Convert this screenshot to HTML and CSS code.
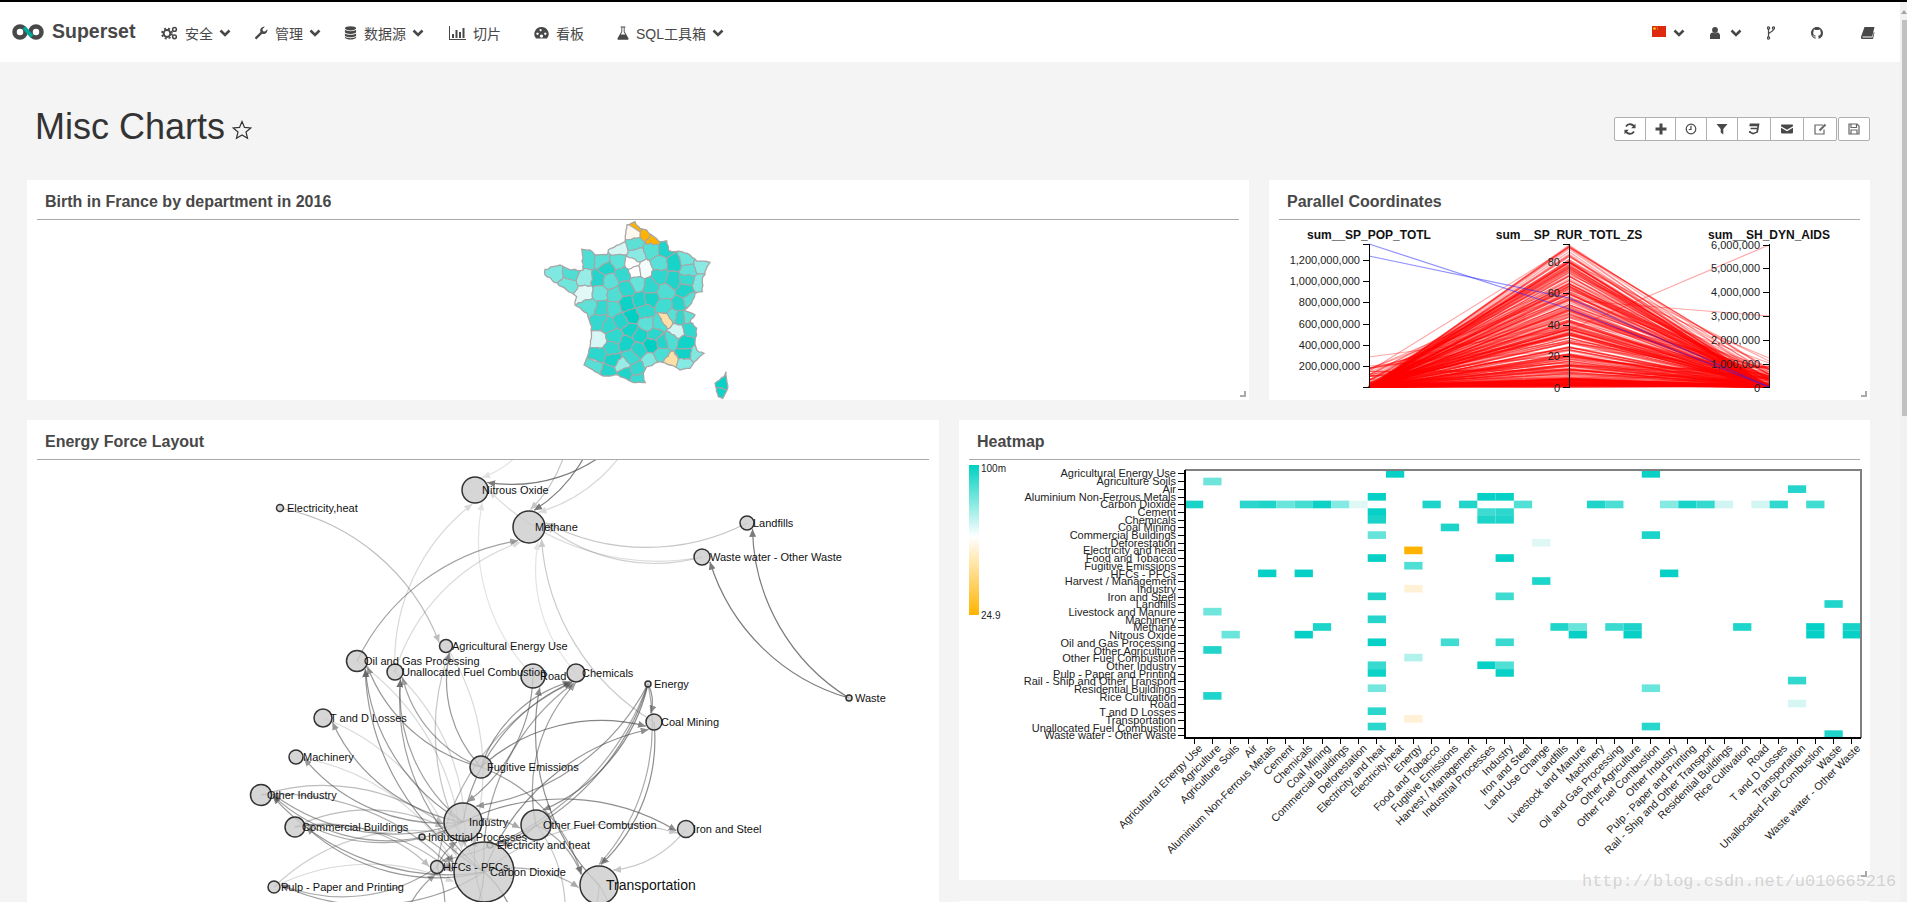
FILE: index.html
```html
<!DOCTYPE html>
<html lang="zh">
<head>
<meta charset="utf-8">
<title>Misc Charts</title>
<link rel="stylesheet" href="styles.css">
</head>
<body>
<div class="topline"></div>
<div class="shell">
  <div class="page">
    <nav class="navbar">
      <a class="brand">
        <svg class="logo" viewBox="0 0 32 16"><circle class="logo-ring" cx="8" cy="8" r="5.500"/><circle class="logo-ring" cx="24" cy="8" r="5.500"/><path class="logo-teal" d="M12 3.500 L20 12.500"/></svg>
        <span>Superset</span>
      </a>
      <ul class="menu">
        <li class="menu-item"><svg class="ico w17" viewBox="0 0 17 14"><circle class="gear-a" cx="6" cy="7.5" r="3.4"/><circle class="gear-b" cx="6" cy="7.5" r="5"/><circle class="gear-c" cx="13.5" cy="3.4" r="1.9"/><circle class="gear-c" cx="13.5" cy="10.8" r="1.9"/></svg><span>安全</span><svg class="chev" viewBox="0 0 12 8"><path d="M1.5 1.5 L6 6 L10.500 1.500"/></svg></li>
        <li class="menu-item"><svg class="ico w14" viewBox="0 0 14 14"><path d="M0.700 11.700 L6.500 5.900 C5.500 3 7.500 0.300 10.900 0.700 L8.500 3.100 L8.900 5.200 L11 5.600 L13.400 3.200 C13.800 6.600 11 8.800 8.100 7.700 L2.300 13.400 Z"/></svg><span>管理</span><svg class="chev" viewBox="0 0 12 8"><path d="M1.5 1.5 L6 6 L10.500 1.500"/></svg></li>
        <li class="menu-item"><svg class="ico w13" viewBox="0 0 13 15"><ellipse cx="6.500" cy="2.500" rx="6" ry="2.300"/><path d="M0.500 4 C2 6 11 6 12.500 4 V6.800 C11 9 2 9 0.500 6.800 Z M0.500 8 C2 10 11 10 12.500 8 V10.400 C11 12.500 2 12.500 0.500 10.400 Z M0.500 11.500 C2 13.500 11 13.500 12.500 11.500 V12.700 C11 15.200 2 15.200 0.500 12.700 Z"/></svg><span>数据源</span><svg class="chev" viewBox="0 0 12 8"><path d="M1.5 1.5 L6 6 L10.500 1.500"/></svg></li>
        <li class="menu-item plain first-plain"><svg class="ico w17" viewBox="0 0 17 14"><path d="M0 0 H1 V13 H17 V14 H0 Z M3 8 H5 V12 H3 Z M6.500 4 H8.500 V12 H6.500 Z M10 6 H12 V12 H10 Z M13.500 2 H15.500 V12 H13.500 Z"/></svg><span>切片</span></li>
        <li class="menu-item plain"><svg class="ico w15" viewBox="0 0 15 14"><path fill-rule="evenodd" d="M7.500 1 A7 7 0 0 1 13 12.500 H2 A7 7 0 0 1 7.500 1 Z M3.500 6.500 a1.200 1.200 0 1 0 .01 0 Z M6.600 3 a1.100 1.100 0 1 0 .01 0 Z M11.300 6.500 a1.200 1.200 0 1 0 .01 0 Z M7.500 8.500 a1.600 1.600 0 1 0 .01 0 Z"/></svg><span>看板</span></li>
        <li class="menu-item"><svg class="ico w12" viewBox="0 0 12 15"><path d="M3.500 0.500 H8.500 V1.500 H7.700 V6 L11.800 13 C12.200 14 11.600 14.700 10.800 14.700 H1.200 C0.400 14.700 -0.200 14 0.200 13 L4.300 6 V1.500 H3.500 Z M5.200 1.500 V6.300 L3.500 9.200 H8.500 L6.800 6.300 V1.500 Z"/></svg><span>SQL工具箱</span><svg class="chev" viewBox="0 0 12 8"><path d="M1.5 1.5 L6 6 L10.500 1.500"/></svg></li>
      </ul>
      <ul class="menu-right">
        <li class="tool lang"><svg class="flag" viewBox="0 0 14 11"><rect class="flag-bg" width="14" height="11"/><circle class="flag-star" cx="2.500" cy="2.500" r="1.300"/><circle class="flag-star" cx="5" cy="1" r=".4"/><circle class="flag-star" cx="5.700" cy="2.200" r=".4"/><circle class="flag-star" cx="5.500" cy="3.700" r=".4"/></svg><svg class="chev" viewBox="0 0 12 8"><path d="M1.5 1.5 L6 6 L10.500 1.500"/></svg></li>
        <li class="tool user"><svg class="ico w10" viewBox="0 0 10 12"><circle cx="5" cy="3" r="2.900"/><path d="M0 12 V8.500 C0 6.500 1.500 5.800 2.700 5.500 C4 6.500 6 6.500 7.300 5.500 C8.500 5.800 10 6.500 10 8.500 V12 Z"/></svg><svg class="chev" viewBox="0 0 12 8"><path d="M1.5 1.5 L6 6 L10.500 1.500"/></svg></li>
        <li class="tool fork"><svg class="ico-line w8" viewBox="0 0 8 13"><circle cx="1.500" cy="1.500" r="1.100"/><circle cx="1.500" cy="11.500" r="1.100"/><circle cx="6.500" cy="1.500" r="1.100"/><path d="M1.500 2.600 V10.400 M6.500 2.600 C6.500 6 1.500 5 1.500 8"/></svg></li>
        <li class="tool hub"><svg class="ico w12" viewBox="0 0 16 16"><path d="M8 0C3.580 0 0 3.580 0 8c0 3.540 2.290 6.530 5.470 7.590.4.070.55-.17.55-.38 0-.19-.01-.82-.01-1.490-2.010.37-2.530-.49-2.690-.94-.09-.23-.48-.94-.82-1.130-.28-.15-.68-.52-.01-.53.63-.01 1.080.58 1.230.82.72 1.210 1.870.87 2.330.66.070-.52.28-.87.51-1.070-1.780-.2-3.640-.89-3.640-3.950 0-.87.31-1.590.82-2.150-.08-.2-.36-1.020.08-2.120 0 0 .67-.21 2.200.82.64-.18 1.320-.27 2-.27.68 0 1.360.09 2 .27 1.530-1.040 2.200-.82 2.200-.82.44 1.100.16 1.920.08 2.120.51.56.82 1.270.82 2.150 0 3.070-1.870 3.750-3.650 3.950.29.25.54.73.54 1.480 0 1.070-.01 1.930-.01 2.200 0 .21.15.46.55.38A8.013 8.013 0 0016 8c0-4.420-3.580-8-8-8z"/></svg></li>
        <li class="tool book"><svg class="ico w14" viewBox="0 0 14 12"><path d="M3.500 0 H13.500 L11.200 9.500 H2 C1.200 9.500 1 10.500 2 10.500 H11.500 L12.800 5 L13.500 5.500 L12 12 H1.500 C0 12 -0.300 10.500 0.200 9.300 Z"/></svg></li>
      </ul>
    </nav>

    <header class="dash-head">
      <h1 class="dash-title">Misc Charts <svg class="star" viewBox="0 0 20 20"><path d="M10 1.500 L12.500 7.400 L18.800 7.900 L14 12 L15.500 18.300 L10 15 L4.500 18.300 L6 12 L1.200 7.900 L7.500 7.400 Z"/></svg></h1>
      <div class="actions">
        <div class="btn-group">
          <button class="btn b32"><svg class="ico w12" viewBox="0 0 12 12"><path class="stroke" d="M10.500 4.500 A4.700 4.700 0 0 0 2 3.500 M1.500 7.500 A4.700 4.700 0 0 0 10 8.500"/><path d="M11.500 0.800 V5.200 H7.200 Z M0.500 11.200 V6.800 H4.800 Z"/></svg></button>
          <button class="btn b30"><svg class="ico w12" viewBox="0 0 12 12"><path d="M4.500 0.500 H7.500 V4.500 H11.500 V7.500 H7.500 V11.500 H4.500 V7.500 H0.500 V4.500 H4.500 Z"/></svg></button>
          <button class="btn b31"><svg class="ico-line w12" viewBox="0 0 12 12"><circle cx="6" cy="6" r="4.800"/><path d="M6 2.800 V6.500 H3.800"/></svg></button>
          <button class="btn b31"><svg class="ico w12" viewBox="0 0 12 12"><path d="M0.500 1 H11.500 L7.300 6 V11.500 L4.700 9.500 V6 Z"/></svg></button>
          <button class="btn b33"><svg class="ico w12" viewBox="0 0 12 12"><path d="M1.800 0.500 H11.500 L10 9.500 L5 11.500 L0.800 9.500 L1.100 8 L2.800 8 L2.700 8.800 L5.200 9.800 L8.300 8.700 L8.800 6.300 H2.400 L2.700 4.700 H9.100 L9.400 3.300 H1.300 Z"/></svg></button>
          <button class="btn b33"><svg class="ico w12" viewBox="0 0 15 11"><path d="M1 0 H14 C14.600 0 15 .4 15 1 V2 L7.500 6.500 L0 2 V1 C0 .4 .4 0 1 0 Z M0 3.800 L7.500 8.300 L15 3.800 V10 C15 10.600 14.600 11 14 11 H1 C.4 11 0 10.600 0 10 Z"/></svg></button>
          <button class="btn b34"><svg class="ico-line w13 soft" viewBox="0 0 13 12"><path d="M9 2 H1 V11 H10 V6.500"/><path class="thick" d="M5.500 7.500 L11.500 1.500"/></svg></button>
        </div>
        <button class="btn b31 solo"><svg class="ico-line w12 soft" viewBox="0 0 12 12"><path d="M1 1 H9 L11 3 V11 H1 Z M3 1 V4.500 H8.500 V1 M3 11 V7 H9 V11"/></svg></button>
      </div>
    </header>

    <section class="row row-top">
      <article class="card">
        <div class="card-head"><h2>Birth in France by department in 2016</h2></div>
        <svg id="france" class="chart" viewBox="27 220 1222 180"></svg>
        <span class="resize"></span>
      </article>
      <article class="card">
        <div class="card-head"><h2>Parallel Coordinates</h2></div>
        <svg id="parallel" class="chart" viewBox="1269 220 601 180"></svg>
        <span class="resize"></span>
      </article>
    </section>

    <section class="row row-bottom">
      <article class="card card-force">
        <div class="card-head"><h2>Energy Force Layout</h2></div>
        <svg id="force" class="chart" viewBox="27 460 912 500"></svg>
      </article>
      <div class="stack">
        <article class="card card-heat">
          <div class="card-head"><h2>Heatmap</h2></div>
          <svg id="heatmap" class="chart" viewBox="959 460 911 420"></svg>
          <span class="resize"></span>
        </article>
        <article class="card card-next"></article>
      </div>
    </section>
  </div>
  <aside class="scrollbar"><span class="scroll-arrow"></span><span class="scroll-thumb"></span></aside>
</div>
<div class="watermark">http://blog.csdn.net/u010665216</div>
<script src="charts.js"></script>
</body>
</html>
```
FILE: styles.css
```css
* { box-sizing: border-box; }
html, body { margin: 0; height: 902px; overflow: hidden; }
body { background: #f4f4f4; font-family: "Liberation Sans", "Noto Sans CJK SC", sans-serif; color: #484848; position: relative; }
.topline { height: 2px; background: #000; }
.shell { display: flex; height: 900px; }
.page { width: 1900px; flex: none; overflow: hidden; }

.navbar { height: 60px; background: #fff; display: flex; align-items: center; padding: 2px 0 0 12px; }
.brand { display: flex; align-items: center; gap: 8px; font-size: 19.5px; font-weight: 700; color: #484848; width: 149px; flex: none; margin-top: -3px; }
.logo { width: 32px; height: 16px; display: block; }
.logo-ring { fill: none; stroke: #484848; stroke-width: 4.500; }
.logo-teal { stroke: #00a699; stroke-width: 4; }

.menu, .menu-right { list-style: none; margin: 0; padding: 0; display: flex; align-items: center; }
.menu { gap: 23px; font-size: 14px; }
.menu-item { display: flex; align-items: center; gap: 6px; }
.menu-item .ico { margin-right: 1px; }
.menu-item.plain { margin-right: 10px; }
.menu-item.first-plain { margin-left: 2px; }
.menu-item > span { white-space: nowrap; }
.ico { fill: #484848; display: block; flex: none; height: 14px; }
.ico-line { fill: none; stroke: #484848; stroke-width: 1.200; display: block; flex: none; height: 14px; }
.ico .stroke { fill: none; stroke: #484848; stroke-width: 1.800; }
.thick { stroke-width: 2; }
.soft { stroke: #666; }
.w8 { width: 8px; } .w10 { width: 10px; } .w12 { width: 12px; } .w13 { width: 13px; }
.w14 { width: 14px; } .w15 { width: 15px; } .w17 { width: 17px; }
.gear-a { fill: none; stroke: #484848; stroke-width: 2; }
.gear-b { fill: none; stroke: #484848; stroke-width: 1.800; stroke-dasharray: 2 2; }
.gear-c { fill: none; stroke: #484848; stroke-width: 1.500; }
.chev { width: 12px; height: 8px; display: block; flex: none; fill: none; stroke: #484848; stroke-width: 2.600; }

.menu-right { margin-left: auto; padding-right: 25px; }
.tool { display: flex; align-items: center; gap: 7px; }
.lang { margin-right: 25px; }
.user { margin-right: 25px; gap: 10px; }
.fork { margin-right: 36px; }
.hub { margin-right: 38px; }
.flag { width: 14px; height: 11px; display: block; margin-top: -4px; }
.flag-bg { fill: #de2910; }
.flag-star { fill: #ffde00; }

.dash-head { height: 118px; display: flex; justify-content: space-between; align-items: flex-start; padding: 45px 30px 0 35px; }
.dash-title { margin: 0; font-size: 36px; line-height: 40px; font-weight: 400; color: #333; display: flex; align-items: center; gap: 0; white-space: pre; }
.star { width: 20px; height: 20px; margin: 5px 0 0 -3px; fill: none; stroke: #333; stroke-width: 1.200; }
.actions { display: flex; margin-top: 10px; gap: 1px; }
.btn-group { display: flex; }
.btn { height: 24px; padding: 0; background: #fff; border: 1px solid #b0b0b0; margin-left: -1px; display: flex; align-items: center; justify-content: center; }
.btn-group .btn:first-child { border-radius: 2px 0 0 2px; margin-left: 0; }
.btn-group .btn:last-child { border-radius: 0 2px 2px 0; }
.solo { border-radius: 2px; margin-left: 0; width: 31px; }
.b30 { width: 31px; } .b31 { width: 32px; } .b32 { width: 32px; } .b33 { width: 34px; } .b34 { width: 34px; }

.row { display: grid; gap: 20px; padding-left: 27px; width: 1870px; }
.row-top { grid-template-columns: 1222px 601px; height: 220px; }
.row-bottom { grid-template-columns: 912px 911px; margin-top: 20px; }
.card { background: #fff; position: relative; overflow: hidden; }
.card-head { margin: 0 10px; height: 40px; border-bottom: 1px solid #aaa; padding: 5px 8px 0; display: flex; align-items: center; }
.card-head h2 { margin: 0; font-size: 16px; font-weight: 700; color: #484848; line-height: 1; }
.chart { display: block; width: 100%; }
#france, #parallel { height: 180px; }
#force { height: 500px; }
#heatmap { height: 420px; }
.resize { position: absolute; right: 3px; bottom: 3px; width: 6px; height: 6px; border-right: 2px solid #aaa; border-bottom: 2px solid #aaa; }
.stack { display: flex; flex-direction: column; gap: 21px; }
.card-heat { height: 460px; }
.card-next { height: 60px; }

.scrollbar { width: 7px; background: #f1f1f1; position: relative; flex: none; }
.scroll-arrow { position: absolute; left: 1px; top: 8px; width: 0; height: 0; border: 3px solid transparent; border-top: 0; border-bottom: 4px solid #a3a3a3; }
.scroll-thumb { position: absolute; left: 2px; right: 0; top: 18px; height: 396px; background: #c1c1c1; }

.watermark { position: absolute; left: 1582px; top: 872px; font-family: "Liberation Mono", monospace; font-size: 16.900px; color: rgba(175, 175, 175, .5); white-space: nowrap; }

.fr-cell { stroke: #a6a6a6; stroke-width: 1.100; }
.fr-outline { fill: none; stroke: #a6a6a6; stroke-width: 1.300; }

.pc-title { font-size: 12px; font-weight: 700; fill: #111; text-anchor: middle; }
.pc-tick { font-size: 11px; fill: #222; text-anchor: end; }
.pc-axis { stroke: #000; stroke-width: 1; fill: none; shape-rendering: crispEdges; }
.pc-line { fill: none; stroke: #f00; stroke-width: 1.200; stroke-opacity: .35; }
.pc-blue { fill: none; stroke: #22f; stroke-width: 1.200; stroke-opacity: .5; }

.edge { fill: none; stroke: #444; stroke-width: 1.200; }
.arrow { fill: #444; }
.node { fill: rgba(204, 204, 204, .8); stroke: #333; stroke-width: 1.500; }
.node-label { font-size: 11px; fill: #111; }
.node-label.big { font-size: 14px; }

.hm-label { font-size: 11px; fill: #222; text-anchor: end; }
.hm-xlabel { font-size: 10.800px; fill: #222; text-anchor: end; }
.hm-legend { font-size: 10px; fill: #222; }
.hm-tick { stroke: #000; stroke-width: 1; shape-rendering: crispEdges; }
.hm-frame { fill: none; stroke: #808080; stroke-width: 2; shape-rendering: crispEdges; }
.hm-axis { fill: none; stroke: #000; stroke-width: 2; shape-rendering: crispEdges; }
.stop-a { stop-color: #00d1c1; }
.stop-b { stop-color: #fff; }
.stop-c { stop-color: #ffb400; }
```
FILE: charts.js
```js
var NS = 'http://www.w3.org/2000/svg';
function el(tag, attrs, parent, text) {
  var n = document.createElementNS(NS, tag);
  for (var k in attrs) n.setAttribute(k, attrs[k]);
  if (text !== undefined) n.textContent = text;
  if (parent) parent.appendChild(n);
  return n;
}
function rng(a) {
  return function () {
    a |= 0; a = a + 0x6D2B79F5 | 0;
    var t = Math.imul(a ^ a >>> 15, 1 | a);
    t = t + Math.imul(t ^ t >>> 7, 61 | t) ^ t;
    return ((t ^ t >>> 14) >>> 0) / 4294967296;
  };
}

/* ---------- France choropleth ---------- */
(function () {
  var svg = document.getElementById('france');
  function P(p) { return [500 + p[0] / 3, 200 + p[1] / 3]; }
  var outline = [[405,65],[420,85],[440,90],[455,105],[475,122],[480,125],[500,122],[505,150],[525,155],[545,155],[570,165],[590,183],[630,187],[615,215],[607,240],[607,275],[585,280],[575,310],[552,330],[585,345],[570,365],[590,385],[590,405],[585,425],[590,450],[612,460],[590,480],[570,505],[540,510],[510,495],[480,485],[440,500],[430,520],[436,548],[400,548],[355,525],[310,528],[252,495],[270,440],[275,380],[262,340],[225,315],[230,290],[185,260],[135,225],[135,208],[180,195],[215,210],[250,210],[245,148],[270,150],[285,165],[320,165],[325,150],[375,125],[380,75]].map(P);
  var corsica = [[678,515],[680,540],[683,565],[668,595],[655,590],[645,550],[672,530]].map(P);
  var seeds = [[415,75,'#ffb300'],[440,100,'#ffb300'],[462,115,'#ffb300'],[400,100,'#fff8ee'],[405,130,'#5ce0d6'],[410,165,'#8ae9e3'],[458,150,'#55dfd5'],[495,150,'#1fd4ca'],[355,145,'#d5f6f3'],[265,180,'#4fded4'],[305,182,'#5ae0d6'],[355,185,'#5ee1d7'],[397,192,'#fff'],[405,213,'#fff'],[432,208,'#f4fdfc'],[480,190,'#5ae0d6'],[522,190,'#18d3c8'],[560,180,'#6ee5dc'],[605,195,'#8aeae3'],[565,210,'#60e1d8'],[600,250,'#7ee8e1'],[560,240,'#38d9cf'],[480,230,'#2cd7cd'],[520,240,'#1fd4ca'],[555,270,'#20d4ca'],[570,300,'#55dfd5'],[535,315,'#25d5cb'],[495,275,'#50ded4'],[452,260,'#2fd7cd'],[410,250,'#66e3da'],[370,222,'#35d8ce'],[320,205,'#20d4ca'],[295,237,'#25d5cb'],[328,243,'#5de0d7'],[165,220,'#7fe8e1'],[215,218,'#4fded4'],[255,235,'#97ece6'],[205,255,'#70e5dc'],[255,280,'#e0f8f6'],[300,280,'#6ee5dc'],[345,285,'#50ded4'],[380,268,'#2cd7cd'],[380,310,'#0fd2c7'],[420,300,'#1cd4c9'],[452,295,'#18d3c8'],[270,320,'#60e1d8'],[305,325,'#35d8ce'],[340,325,'#48ddd3'],[395,350,'#00d0c4'],[435,335,'#30d8ce'],[495,320,'#40dcd2'],[540,350,'#2fd7cd'],[565,350,'#60e1d8'],[495,360,'#fde0a8'],[520,345,'#58dfd6'],[300,365,'#35d8ce'],[325,375,'#30d8ce'],[365,365,'#25d5cb'],[440,370,'#5de0d7'],[480,370,'#4bded4'],[530,395,'#d0f5f2'],[570,385,'#30d8ce'],[295,420,'#d8f6f4'],[345,410,'#30d8ce'],[390,390,'#12d3c8'],[420,405,'#18d3c8'],[465,405,'#2bd6cc'],[515,420,'#4fded4'],[485,425,'#25d5cb'],[555,430,'#12d3c8'],[335,445,'#2fd7cd'],[380,430,'#15d3c8'],[415,450,'#25d5cb'],[455,435,'#00d0c4'],[295,465,'#2dd7cd'],[555,460,'#10d2c7'],[590,465,'#7ee8e1'],[510,485,'#fde0a8'],[485,465,'#4bded4'],[555,495,'#85eae3'],[340,480,'#18d3c8'],[395,470,'#3adad0'],[450,485,'#7fe8e1'],[365,497,'#98ece7'],[285,500,'#55dfd5'],[325,515,'#25d5cb'],[375,520,'#20d4ca'],[415,510,'#35d8ce'],[420,535,'#3adad0'],[665,550,'#08d1c6'],[660,580,'#10d2c7']];
  var pts = seeds.map(function (s) { var p = P(s); return { x: p[0], y: p[1], c: s[2] }; });
  function clip(poly, a, b, c) { /* keep a*x+b*y<=c */
    var out = [];
    for (var i = 0; i < poly.length; i++) {
      var p = poly[i], q = poly[(i + 1) % poly.length];
      var dp = a * p[0] + b * p[1] - c, dq = a * q[0] + b * q[1] - c;
      if (dp <= 0) out.push(p);
      if ((dp < 0 && dq > 0) || (dp > 0 && dq < 0)) {
        var t = dp / (dp - dq);
        out.push([p[0] + t * (q[0] - p[0]), p[1] + t * (q[1] - p[1])]);
      }
    }
    return out;
  }
  /* Roughen each edge the same way on both of its sides, so borders stay shared. */
  function rough(poly, amp) {
    var out = [];
    for (var i = 0; i < poly.length; i++) {
      var p = poly[i], q = poly[(i + 1) % poly.length];
      var flip = p[0] > q[0] || (p[0] === q[0] && p[1] > q[1]);
      var a = flip ? q : p, b = flip ? p : q;
      var len = Math.hypot(b[0] - a[0], b[1] - a[1]);
      out.push(p);
      if (len < 3) continue;
      var seed = Math.round(a[0] * 3) * 31 + Math.round(a[1] * 3) * 17 + Math.round(b[0] * 3) * 13 + Math.round(b[1] * 3) * 7;
      var r = rng(seed);
      var n = Math.max(2, Math.round(len / 3)), mids = [];
      for (var k = 1; k < n; k++) {
        var t = k / n, off = (r() - .5) * amp * 2;
        mids.push([a[0] + (b[0] - a[0]) * t - (b[1] - a[1]) / len * off, a[1] + (b[1] - a[1]) * t + (b[0] - a[0]) / len * off]);
      }
      if (flip) mids.reverse();
      out = out.concat(mids);
    }
    return out;
  }
  function str(poly) { return poly.map(function (p) { return p[0].toFixed(1) + ',' + p[1].toFixed(1); }).join(' '); }
  var coast = rough(outline, .8), isle = rough(corsica, .5);
  var defs = el('defs', {}, svg);
  var cp = el('clipPath', { id: 'fr-clip' }, defs);
  el('polygon', { points: str(coast) }, cp);
  el('polygon', { points: str(isle) }, cp);
  var g = el('g', { 'clip-path': 'url(#fr-clip)' }, svg);
  pts.forEach(function (s, i) {
    var poly = [[520, 200], [760, 200], [760, 410], [520, 410]];
    pts.forEach(function (o, j) {
      if (i === j) return;
      var a = o.x - s.x, b = o.y - s.y;
      var c = (o.x * o.x + o.y * o.y - s.x * s.x - s.y * s.y) / 2;
      poly = clip(poly, a, b, c);
    });
    if (poly.length) el('polygon', { points: str(rough(poly, .9)), fill: s.c, 'class': 'fr-cell' }, g);
  });
  el('polygon', { points: str(coast), 'class': 'fr-outline' }, svg);
  el('polygon', { points: str(isle), 'class': 'fr-outline' }, svg);
})();

/* ---------- Parallel coordinates ---------- */
(function () {
  var svg = document.getElementById('parallel');
  var A = 1369, B = 1569, C = 1769, T = 244, Z = 387.5;
  var lines = el('g', {}, svg);
  var r = rng(42);
  function line(a, b, c, cls) {
    el('path', { d: 'M' + A + ' ' + a.toFixed(1) + 'L' + B + ' ' + b.toFixed(1) + 'L' + C + ' ' + c.toFixed(1), 'class': cls }, lines);
  }
  for (var i = 0; i < 250; i++) {
    var u = r(), v = r(), w = r();
    var mid = Z - 1 - 142 * Math.pow(u, 1.2);
    var a = Z - Math.pow(v, 10) * 20;
    var c = Z - Math.pow(w, 6) * 22;
    line(a, mid, c, 'pc-line');
  }
  for (var j = 0; j < 50; j++) line(Z - r() * 2, Z - r() * 9, Z - r() * 2, 'pc-line');
  line(366, 350, 386, 'pc-line');
  line(357, 330, 380, 'pc-line');
  line(372, 300, 385, 'pc-line');
  line(385, 330, 245, 'pc-line');
  line(386, 300, 316, 'pc-line');
  line(384, 275, 358, 'pc-line');
  line(386, 262, 361, 'pc-line');
  line(385, 290, 363, 'pc-line');
  line(244, 309, 387, 'pc-blue');
  line(256, 298, 387, 'pc-blue');

  function axis(x, ticks, title, titleY) {
    el('text', { x: x, y: titleY, 'class': 'pc-title' }, svg, title);
    el('path', { d: 'M' + x + ' ' + T + 'V' + Z, 'class': 'pc-axis' }, svg);
    ticks.forEach(function (t) {
      el('path', { d: 'M' + (x - 6) + ' ' + t[0] + 'H' + x, 'class': 'pc-axis' }, svg);
      el('text', { x: x - 9, y: t[0] + 4, 'class': 'pc-tick' }, svg, t[1]);
    });
  }
  axis(A, [[Z, ''], [366, '200,000,000'], [345, '400,000,000'], [324, '600,000,000'], [302, '800,000,000'], [281, '1,000,000,000'], [260, '1,200,000,000'], [T, '']], 'sum__SP_POP_TOTL', 239);
  axis(B, [[Z, '0'], [356, '20'], [325, '40'], [293, '60'], [262, '80'], [T, '']], 'sum__SP_RUR_TOTL_ZS', 239);
  axis(C, [[Z, '0'], [364, '1,000,000'], [340, '2,000,000'], [316, '3,000,000'], [292, '4,000,000'], [268, '5,000,000'], [T + 1, '6,000,000']], 'sum__SH_DYN_AIDS', 239);
})();

/* ---------- Force layout ---------- */
(function () {
  var svg = document.getElementById('force');
  var N = {
    nit: [475, 490, 13, 'Nitrous Oxide', 482], met: [529, 527, 16, 'Methane', 535],
    elh: [280, 508, 3.5, 'Electricity,heat', 287], lan: [747, 523, 7, 'Landfills', 753],
    wwo: [702, 557, 8, 'Waste water - Other Waste', 710], was: [849, 698, 3, 'Waste', 855],
    ene: [648, 684, 3, 'Energy', 654], coa: [654, 722, 8, 'Coal Mining', 661],
    che: [576, 673, 9, 'Chemicals', 582], roa: [533, 676, 12, 'Road', 540],
    agr: [446, 646, 6.5, 'Agricultural Energy Use', 452], oil: [357, 661, 10.5, 'Oil and Gas Processing', 364],
    una: [395, 672, 8, 'Unallocated Fuel Combustion', 402], tdl: [323, 718, 9, 'T and D Losses', 330],
    mac: [296, 757, 7, 'Machinery', 303], oin: [261, 795, 10.5, 'Other Industry', 267],
    com: [295, 827, 10, 'Commercial Buildings', 302], ipr: [422, 837, 3, 'Industrial Processes', 428],
    hfc: [437, 867, 6.5, 'HFCs - PFCs', 443], pul: [274, 887, 6, 'Pulp - Paper and Printing', 281],
    fug: [481, 767, 11, 'Fugitive Emissions', 487], ind: [463, 822, 19, 'Industry', 469],
    ofu: [536, 825, 15, 'Other Fuel Combustion', 543], eah: [490, 845, 3, 'Electricity and heat', 497],
    car: [484, 872, 30, 'Carbon Dioxide', 490], tra: [599, 885, 19, 'Transportation', 606],
    iro: [686, 829, 8.5, 'Iron and Steel', 693],
    t1: [640, 420, 5], t2: [600, 405, 5], t3: [570, 400, 5], t4: [540, 420, 5], t5: [620, 440, 5],
    b1: [430, 965, 5], b2: [520, 960, 5], b3: [470, 1000, 5], b4: [560, 960, 5], b5: [400, 950, 5], b6: [610, 960, 5]
  };
  var E = [
    ['was','lan',.7],['was','wwo',.7],['lan','met',.3],['wwo','met',.25],['wwo','nit',.18],
    ['elh','agr',.35],['oil','met',.5],['una','met',.2],['una','nit',.2],['roa','nit',.14],
    ['coa','met',.28],['che','met',.14],['t5','nit',.7],['t1','met',.2],['t2','met',.7],['t3','met',.3],['t4','nit',.15],
    ['ene','coa',.6],['ene','ind',.55],['ene','ofu',.6],['ene','car',.55],['ene','hfc',.45],['ene','tra',.45],
    ['fug','coa',.65],['car','coa',.6],['ind','che',.55],['fug','che',.55],['car','che',.5],['ofu','che',.5],
    ['hfc','che',.4],['tra','roa',.6],['roa','ind',.55],['coa','tra',.6],['ind','iro',.6],['car','iro',.3],['iro','tra',.3],
    ['ind','oil',.55],['car','oil',.55],['fug','oil',.55],['fug','una',.5],['car','una',.5],['ind','una',.5],['fug','agr',.55],['car','agr',.3],
    ['ind','tdl',.55],['tdl','car',.2],['ind','mac',.55],['mac','car',.18],['oil','car',.2],['una','car',.2],['agr','car',.2],
    ['car','oin',.55],['ind','oin',.5],['ipr','oin',.5],['oin','ind',.35],['oin','car',.4],
    ['car','com',.55],['ind','com',.45],['com','ind',.35],['com','car',.4],['com','hfc',.35],
    ['car','pul',.5],['hfc','pul',.45],['pul','car',.2],['pul','ind',.25],['hfc','ind',.5],['ipr','car',.5],['ofu','car',.5],
    ['ind','ofu',.45],['car','tra',.45],['ofu','tra',.5],['fug','tra',.5],
    ['car','b1',.6],['car','b2',.6],['b3','car',.5],['b5','hfc',.5],['hfc','b1',.5],['b4','tra',.3],['tra','b6',.4],['tra','b4',.4],['b2','ind',.4],['ofu','b4',.3]
  ];
  var defs = el('defs', {}, svg);
  var m = el('marker', { id: 'arrow', viewBox: '0 -4 9 8', refX: 9, markerWidth: 8, markerHeight: 7, markerUnits: 'userSpaceOnUse', orient: 'auto' }, defs);
  el('path', { d: 'M0 -4L9 0L0 4Z', 'class': 'arrow' }, m);
  E.forEach(function (e) {
    var s = N[e[0]], t = N[e[1]];
    var dx = t[0] - s[0], dy = t[1] - s[1], d = Math.sqrt(dx * dx + dy * dy);
    var k = (d - t[2] - 1) / d;
    var tx = s[0] + dx * k - dy / d * t[2] * .25, ty = s[1] + dy * k + dx / d * t[2] * .25;
    el('path', { d: 'M' + s[0] + ' ' + s[1] + 'A' + d.toFixed(1) + ' ' + d.toFixed(1) + ' 0 0 1 ' + tx.toFixed(1) + ' ' + ty.toFixed(1), 'class': 'edge', opacity: e[2], 'marker-end': 'url(#arrow)' }, svg);
  });
  var key;
  for (key in N) el('circle', { cx: N[key][0], cy: N[key][1], r: N[key][2], 'class': 'node' }, svg);
  for (key in N) if (N[key][3]) {
    el('text', { x: N[key][4], y: N[key][1] + (key === 'tra' ? 5 : 4), 'class': 'node-label' + (key === 'tra' ? ' big' : '') }, svg, N[key][3]);
  }
})();

/* ---------- Heatmap ---------- */
(function () {
  var svg = document.getElementById('heatmap');
  var L = 1185, R = 1861, T = 470, B = 738;
  var cols = ['Agricultural Energy Use','Agriculture','Agriculture Soils','Air','Aluminium Non-Ferrous Metals','Cement','Chemicals','Coal Mining','Commercial Buildings','Deforestation','Electricity and heat','Electricity,heat','Energy','Food and Tobacco','Fugitive Emissions','Harvest / Management','Industrial Processes','Industry','Iron and Steel','Land Use Change','Landfills','Livestock and Manure','Machinery','Oil and Gas Processing','Other Agriculture','Other Fuel Combustion','Other Industry','Pulp - Paper and Printing','Rail - Ship and Other Transport','Residential Buildings','Rice Cultivation','Road','T and D Losses','Transportation','Unallocated Fuel Combustion','Waste','Waste water - Other Waste'];
  var rows = ['Agricultural Energy Use','Agriculture Soils','Air','Aluminium Non-Ferrous Metals','Carbon Dioxide','Cement','Chemicals','Coal Mining','Commercial Buildings','Deforestation','Electricity and heat','Food and Tobacco','Fugitive Emissions','HFCs - PFCs','Harvest / Management','Industry','Iron and Steel','Landfills','Livestock and Manure','Machinery','Methane','Nitrous Oxide','Oil and Gas Processing','Other Agriculture','Other Fuel Combustion','Other Industry','Pulp - Paper and Printing','Rail - Ship and Other Transport','Residential Buildings','Rice Cultivation','Road','T and D Losses','Transportation','Unallocated Fuel Combustion','Waste water - Other Waste'];
  var D = '#07d1c6';
  var cells = [
    [0,11,D],[0,25,'#0ad1c6'],[1,1,'#6ee4da'],[2,33,'#25d5cb'],[3,10,D],[3,16,D],[3,17,D],
    [4,0,'#18d3c8'],[4,3,'#2dd6cc'],[4,4,'#1fd4c9'],[4,5,'#6ae5dc'],[4,6,'#45dcd2'],[4,7,'#0bd1c6'],[4,8,'#85eae3'],[4,9,'#def8f6'],
    [4,13,'#1cd4c9'],[4,15,'#22d5ca'],[4,18,'#52dfd6'],[4,22,'#1fd4c9'],[4,23,'#4bded4'],[4,26,'#86eae3'],[4,27,'#18d3c8'],[4,28,'#36d9cf'],[4,29,'#d0f5f2'],[4,31,'#d4f6f3'],[4,32,'#30d8ce'],[4,34,'#3fdcd2'],
    [5,10,D],[5,16,'#3ddbd1'],[5,17,'#2dd7cd'],[6,10,'#1bd2c8'],[6,16,'#1dd4c9'],[6,17,'#1ed4ca'],[7,14,'#1cd4c9'],
    [8,10,'#66e3da'],[8,25,'#1ad4c9'],[9,19,'#dff8f6'],[10,12,'#ffb300'],[11,10,D],[11,17,D],[12,12,'#4fdfd5'],
    [13,4,D],[13,6,D],[13,26,D],[14,19,'#1cd6cb'],[15,12,'#fff0d6'],[16,10,'#20d4ca'],[16,17,'#3ddbd1'],[17,35,'#22d5ca'],
    [18,1,'#70e5dc'],[19,10,'#25d5cb'],[20,7,'#1bd4ca'],[20,20,'#20d4ca'],[20,21,'#6ae5dc'],[20,23,'#3bdad1'],[20,24,'#1dd3c9'],[20,30,'#1ed5cb'],[20,34,'#06d1c6'],[20,36,'#15d3c8'],
    [21,2,'#6ae5dc'],[21,6,D],[21,21,D],[21,24,D],[21,34,D],[21,36,D],[22,10,D],[22,14,'#40dcd2'],[22,17,'#38d9cf'],
    [23,1,'#20d4ca'],[24,12,'#b2f2ed'],[25,10,'#38d9cf'],[25,16,D],[25,17,'#4fdfd5'],[26,10,'#0dd2c7'],[26,17,D],[27,33,'#30d8ce'],
    [28,10,'#75e6dd'],[28,25,'#6ae5dc'],[29,1,'#1fd4ca'],[30,33,'#d5f6f3'],[31,10,'#2bd6cc'],[32,12,'#fff0d6'],[33,10,'#2bd6cc'],[33,25,'#27d6cc'],[34,35,'#1fd4ca']
  ];
  var cw = (R - L) / cols.length, rh = (B - T) / rows.length;
  cells.forEach(function (c) {
    el('rect', { x: (L + c[1] * cw).toFixed(2), y: (T + c[0] * rh).toFixed(2), width: cw.toFixed(2), height: rh.toFixed(2), fill: c[2] }, svg);
  });
  el('path', { d: 'M' + L + ' ' + T + 'H' + R + 'V' + B, 'class': 'hm-frame' }, svg);
  el('path', { d: 'M' + L + ' ' + T + 'V' + B + 'H' + R, 'class': 'hm-axis' }, svg);
  rows.forEach(function (name, i) {
    var y = Math.round(473.4 + i * 7.7);
    el('path', { d: 'M1178 ' + y + 'H' + L, 'class': 'hm-tick' }, svg);
    el('text', { x: 1176, y: y + 4, 'class': 'hm-label' }, svg, name);
  });
  cols.forEach(function (name, i) {
    var x = L + (i + .5) * cw;
    el('path', { d: 'M' + x.toFixed(1) + ' ' + B + 'V' + (B + 6), 'class': 'hm-tick' }, svg);
    el('text', { 'class': 'hm-xlabel', transform: 'translate(' + (x + 9).toFixed(1) + ' 749) rotate(-45)' }, svg, name);
  });
  var defs = el('defs', {}, svg);
  var g = el('linearGradient', { id: 'hm-grad', x1: 0, y1: 0, x2: 0, y2: 1 }, defs);
  el('stop', { offset: '0', 'class': 'stop-a' }, g);
  el('stop', { offset: '.48', 'class': 'stop-b' }, g);
  el('stop', { offset: '1', 'class': 'stop-c' }, g);
  el('rect', { x: 969, y: 465, width: 10, height: 150, fill: 'url(#hm-grad)' }, svg);
  el('text', { x: 981, y: 472, 'class': 'hm-legend' }, svg, '100m');
  el('text', { x: 981, y: 619, 'class': 'hm-legend' }, svg, '24.9');
})();
```
